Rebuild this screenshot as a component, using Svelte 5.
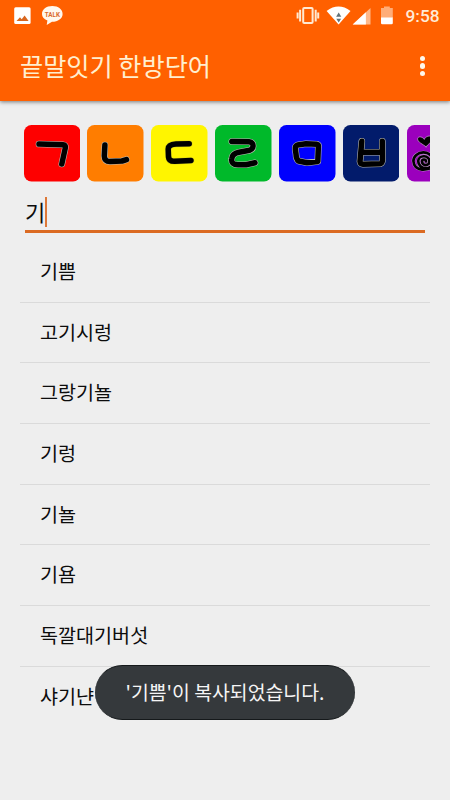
<script>
  const tiles = [
    { color: '#fe0000', d: 'M15 19 L39 19.8 Q42 20 41.3 23 L37.8 39' },
    { color: '#ff7d00', d: 'M17.9 20 L17.3 31 Q17.5 36.5 23 36.5 L35 36 L39.5 34.6' },
    { color: '#fff500', d: 'M38.2 18.8 L25 19 Q17.3 19.4 17.2 24 L17.5 32 Q17.8 36.5 24 36.3 L40 35.5', edge: '#d9d31c' },
    { color: '#00b92a', d: 'M16.8 16.5 L34 16.7 Q38.5 17.2 38 21.5 Q37.5 25.3 32 25.8 L24 27.2 Q17 28.5 16.7 34 Q16 39.8 23 39.8 L31 39.7 L40 37.8' },
    { color: '#0000fe', d: 'M18.5 20 L27 18.8 L38 19.3 Q40 19.8 39.3 23 L38.8 36.5 L28 37.8 L19.5 36 Q17 34 17 29 L16.3 24 Q16 21 18.5 20 Z' },
    { color: '#021b6b', d: 'M18.8 16.3 L17 36.5 Q17.2 39 20 39.2 L37.5 38.7 Q39.5 38 39.5 34 L39.3 16.3 M18.5 27.3 L39 27.3' }
  ];
  const spiral = 'M19 36.5 A2 2 0 0 0 15 36.5 A3.7 3.7 0 0 0 22.4 36.5 A5.6 5 0 0 0 11.2 36 A7.6 7.4 0 0 0 26.4 36 A10 8.6 0 0 0 6.4 36 Q6.8 43.5 15 44.6 Q22 45 27 41';
  const words = ['기쁨', '고기시렁', '그랑기뇰', '기렁', '기뇰', '기욤', '독깔대기버섯', '샤기냔'];
</script>

<div class="screen">
  <header>
    <div class="status">
      <svg class="left" width="60" height="32" viewBox="0 0 60 32">
        <rect x="14.2" y="7.2" width="16.4" height="16.8" rx="1.5" fill="#fff" />
        <path d="M16.5 21 L20 17.3 L21.7 19.2 L24.6 15.5 L28.6 21Z" fill="#d9661e" />
        <path d="M52.3 6 C58.4 6 62.6 9.4 62.6 14 C62.6 18.6 58 21.8 52 21.8 L46.7 25 L47.4 20.6 C43.7 19 42 16.8 42 14 C42 9.4 46.2 6 52.3 6Z" fill="#fff8ee" />
        <text x="44.8" y="17.1" textLength="15.2" lengthAdjust="spacingAndGlyphs">TALK</text>
      </svg>
      <svg class="right" width="110" height="32" viewBox="0 0 110 32">
        <g fill="none" stroke="#ffe9d2" stroke-width="2">
          <rect x="7.2" y="8.1" width="9.4" height="15" rx="1" />
          <path d="M4.1 9.8 V21.4 M1.6 12.6 V18.6 M19.7 9.8 V21.4 M22.2 12.6 V18.6" />
        </g>
        <path d="M30.6 11 Q42.5 2.2 54.5 11 L42.6 24.6Z" fill="#fff" />
        <path d="M42.7 12.5 L45.3 16.7 H40.1Z M42.7 22.6 L40.3 18.8 H45.1Z" fill="#61737b" />
        <path d="M74.5 8 V24.5 H56.7Z" fill="#ffb98a" />
        <path d="M69.9 12.3 V24.5 H56.7Z" fill="#fff" />
        <path d="M85 8 H88 V6.5 H93.8 V8 H96.8 V18 H85Z" fill="#ffad78" />
        <path d="M85 17.5 H96.8 V23 Q96.8 24.3 95.5 24.3 H86.3 Q85 24.3 85 23Z" fill="#fff" />
      </svg>
      <span class="time">9:58</span>
    </div>
    <div class="bar">
      <h1>끝말잇기 한방단어</h1>
      <div class="dots"><i></i><i></i><i></i></div>
    </div>
  </header>

  <main>
    <div class="tiles">
      {#each tiles as tile}
        <svg viewBox="0 0 56.5 56.5">
          <rect width="56.5" height="56.5" rx="7.5" fill={tile.color} />
          <path class="edge" d={tile.d} stroke={tile.edge ?? '#bdbdb5'} />
          <path class="ink" d={tile.d} />
        </svg>
      {/each}
      <svg viewBox="0 0 56.5 56.5">
        <rect width="56.5" height="56.5" rx="7.5" fill="#9b00bd" />
        <path d="M19 21.8 C16 19 10.3 17.3 10.6 13.7 C11 11 15.5 11.4 17.3 14.4 C19 10 25.8 10 25.5 14 C25.2 17.2 21 19 19 21.8Z" fill="#000" stroke="#c9a3d3" stroke-width=".7" />
        <path class="swirl-edge" d={spiral} />
        <path class="swirl" d={spiral} />
      </svg>
    </div>

    <div class="field"><span>기</span><b></b></div>

    <ul>
      {#each words as word}
        <li>{word}</li>
      {/each}
    </ul>
  </main>

  <div class="toast">'기쁨'이 복사되었습니다.</div>
</div>

<style>
  :global(body) { margin: 0; }
  .screen {
    position: relative;
    width: 450px;
    height: 800px;
    overflow: hidden;
    background: #eee;
    color: #0c0c0c;
    font-family: "Noto Sans CJK KR", sans-serif;
  }
  header {
    height: 101px;
    background: #ff6000;
    box-shadow: 0 1px 4px rgba(0, 0, 0, .5);
  }
  .status { display: flex; height: 32px; }
  .left { flex: none; overflow: visible; }
  .left text { font: 700 6.8px Roboto, sans-serif; fill: #d96a2b; }
  .right { flex: none; margin-left: 235.5px; }
  .time {
    flex: none;
    font: 500 17.3px/33px Roboto, sans-serif;
    color: #ffebd7;
    white-space: nowrap;
  }
  .bar {
    display: flex;
    align-items: center;
    justify-content: space-between;
    height: 68px;
    padding: 0 25px 0 20px;
  }
  h1 {
    margin: 0 0 3px;
    font-size: 25.2px;
    line-height: 36px;
    font-weight: 400;
    color: #ffefcf;
    white-space: nowrap;
  }
  .dots { display: flex; flex-direction: column; gap: 2.3px; }
  .dots i { width: 5.2px; height: 5.2px; border-radius: 50%; background: #fff8ec; }
  main { padding: 24px 20px 0; }
  .tiles {
    display: flex;
    gap: 7.4px;
    padding-left: 3.5px;
    overflow: hidden;
  }
  .tiles svg { flex: none; width: 56.5px; height: 56.5px; }
  .tiles path { stroke-linecap: round; stroke-linejoin: round; }
  .edge, .ink, .swirl, .swirl-edge { fill: none; }
  .edge { stroke-width: 6.6; }
  .ink { stroke: #000; stroke-width: 5.5; }
  .swirl-edge { stroke: #c295cf; stroke-width: 3.5; }
  .swirl { stroke: #000; stroke-width: 2.7; }
  .field {
    display: flex;
    align-items: center;
    height: 48.5px;
    margin: 0 5px;
    border-bottom: 3px solid #db6a22;
  }
  .field span { font-size: 22px; line-height: 32px; margin-top: 10px; }
  .field b { width: 2px; height: 30px; margin: 13px 0 0; background: #dd7838; }
  ul { margin: 9px 0 0; padding: 0; list-style: none; }
  li {
    box-sizing: border-box;
    height: 60.7px;
    padding: 0 20px;
    border-bottom: 1px solid #dadada;
    font-size: 19.6px;
    line-height: 58px;
  }
  li:last-child { border: 0; }
  .toast {
    position: absolute;
    left: 95px;
    top: 665px;
    width: 260px;
    height: 55px;
    box-sizing: border-box;
    border-top: 1px solid #15191b;
    border-bottom: 1px solid #15191b;
    border-radius: 28px;
    background: #35393c;
    color: #f5f5f5;
    font-size: 19.4px;
    line-height: 52px;
    text-align: center;
    white-space: nowrap;
  }
</style>
